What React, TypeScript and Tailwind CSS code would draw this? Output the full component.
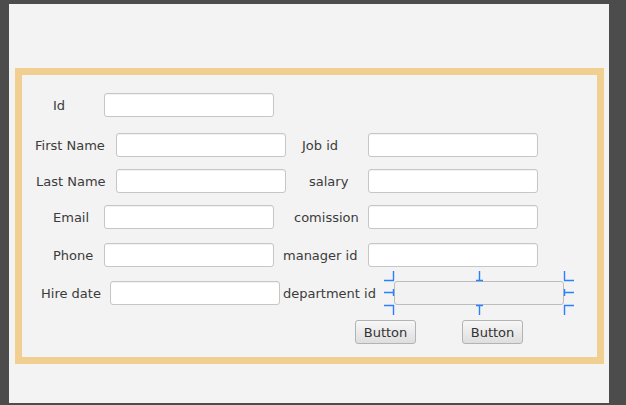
import React from "react";

function Field({ disabled = false }: { disabled?: boolean }) {
  return (
    <div
      className={
        "h-[24px] w-[170px] shrink-0 rounded-[3px] border " +
        (disabled
          ? "border-[#bdbdbd] bg-[#f2f2f2]"
          : "border-[#c6c6c6] bg-white shadow-[inset_0_1px_1px_rgba(0,0,0,0.06)]")
      }
    />
  );
}

function Label({ text, ml, w }: { text: string; ml: string; w: string }) {
  return (
    <div className={`${ml} ${w} shrink-0 whitespace-nowrap pt-[2px] leading-[24px]`}>{text}</div>
  );
}

// selection handles drawn by the form designer around the selected field
function Handles() {
  const c = "#2a7fff";
  return (
    <svg
      className="pointer-events-none absolute left-[-10px] top-[-10px]"
      width="191"
      height="45"
      viewBox="0 0 191 45"
    >
      <g stroke={c} strokeWidth="1.4" fill="none">
        <path d="M9.5 0V9.5M0 9.5H10" />
        <path d="M0 21.5H10M9.5 18V25" />
        <path d="M0 34.5H10M9.5 34V44" />
        <path d="M95.5 0V9.5M92 9.5H99" />
        <path d="M92 34.5H99M95.5 34V44" />
        <path d="M180.5 0V9.5M180 9.5H190" />
        <path d="M180 21.5H190M180.5 18V25" />
        <path d="M180 34.5H190M180.5 34V44" />
      </g>
    </svg>
  );
}

function Btn() {
  return (
    <button className="h-[24px] w-[61px] shrink-0 rounded-[3px] border border-[#b3b3b3] bg-gradient-to-b from-[#f7f7f7] to-[#dedede] pt-[1px] text-[13px] leading-[21px] text-[#333]">
      Button
    </button>
  );
}

export default function App() {
  return (
    <div
      className="h-[405px] w-[626px] overflow-hidden bg-[#4c4c4c] pl-[9px] pt-[4px] text-[13px] text-[#3b3b3b]"
      style={{ fontFamily: '"DejaVu Sans", Verdana, sans-serif' }}
    >
      <div className="h-[399px] w-[600px] bg-[#f3f3f3] pl-[6px] pt-[64px]">
        <div className="flex h-[296px] w-[589px] flex-col border-[7px] border-[#f1cf91]">
          {/* Id */}
          <div className="mt-[18px] flex h-[24px] items-center">
            <Label text="Id" ml="ml-[31px]" w="w-[51px]" />
            <Field />
          </div>

          {/* First Name / Job id */}
          <div className="mt-[16px] flex h-[24px] items-center">
            <Label text="First Name" ml="ml-[13px]" w="w-[81px]" />
            <Field />
            <Label text="Job id" ml="ml-[16px]" w="w-[66px]" />
            <Field />
          </div>

          {/* Last Name / salary */}
          <div className="mt-[12px] flex h-[24px] items-center">
            <Label text="Last Name" ml="ml-[14px]" w="w-[80px]" />
            <Field />
            <Label text="salary" ml="ml-[23px]" w="w-[59px]" />
            <Field />
          </div>

          {/* Email / comission */}
          <div className="mt-[12px] flex h-[24px] items-center">
            <Label text="Email" ml="ml-[31px]" w="w-[51px]" />
            <Field />
            <Label text="comission" ml="ml-[20px]" w="w-[74px]" />
            <Field />
          </div>

          {/* Phone / manager id */}
          <div className="mt-[14px] flex h-[24px] items-center">
            <Label text="Phone" ml="ml-[31px]" w="w-[51px]" />
            <Field />
            <Label text="manager id" ml="ml-[9px]" w="w-[85px]" />
            <Field />
          </div>

          {/* Hire date / department id */}
          <div className="mt-[14px] flex h-[24px] items-center">
            <Label text="Hire date" ml="ml-[19px]" w="w-[69px]" />
            <Field />
            <Label text="department id" ml="ml-[3px]" w="w-[111px]" />
            <div className="relative">
              <Field disabled />
              <Handles />
            </div>
          </div>

          {/* buttons */}
          <div className="mt-[15px] flex h-[24px] items-center">
            <div className="ml-[333px]">
              <Btn />
            </div>
            <div className="ml-[46px]">
              <Btn />
            </div>
          </div>
        </div>
      </div>
    </div>
  );
}
